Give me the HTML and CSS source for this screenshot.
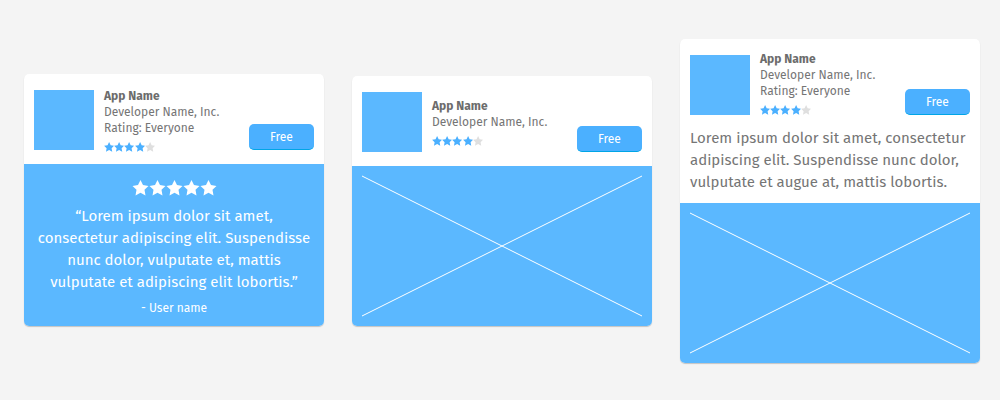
FILE: index.html
```html
<!DOCTYPE html>
<html lang="en">
<head>
<meta charset="utf-8">
<meta name="viewport" content="width=device-width, initial-scale=1">
<title>App cards</title>
<link rel="stylesheet" href="styles.css">
</head>
<body>
<svg class="defs" aria-hidden="true">
  <symbol id="star" viewBox="0 0 16 16"><path d="M8 0l2.500 5.100 5.500.8-4 3.900 1 5.600L8 12.800 3 15.400l1-5.600L0 5.900l5.500-.8z"/></symbol>
</svg>
<main class="cards">
  <article class="card card-review">
    <header class="app">
      <div class="app-icon"></div>
      <div class="app-info">
        <h2 class="app-name">App Name</h2>
        <p class="app-meta">Developer Name, Inc.</p>
        <p class="app-meta">Rating: Everyone</p>
        <div class="stars" role="img" aria-label="4 of 5 stars">
          <svg><use href="#star"/></svg><svg><use href="#star"/></svg><svg><use href="#star"/></svg><svg><use href="#star"/></svg><svg class="off"><use href="#star"/></svg>
        </div>
      </div>
      <button class="get" type="button">Free</button>
    </header>
    <section class="review">
      <div class="stars stars-large" role="img" aria-label="5 of 5 stars">
        <svg><use href="#star"/></svg><svg><use href="#star"/></svg><svg><use href="#star"/></svg><svg><use href="#star"/></svg><svg><use href="#star"/></svg>
      </div>
      <blockquote class="quote">“Lorem ipsum dolor sit amet,<br>consectetur adipiscing elit. Suspendisse<br>nunc dolor, vulputate et, mattis<br>vulputate et adipiscing elit lobortis.”</blockquote>
      <p class="author">- User name</p>
    </section>
  </article>

  <article class="card">
    <header class="app">
      <div class="app-icon"></div>
      <div class="app-info">
        <h2 class="app-name">App Name</h2>
        <p class="app-meta">Developer Name, Inc.</p>
        <div class="stars" role="img" aria-label="4 of 5 stars">
          <svg><use href="#star"/></svg><svg><use href="#star"/></svg><svg><use href="#star"/></svg><svg><use href="#star"/></svg><svg class="off"><use href="#star"/></svg>
        </div>
      </div>
      <button class="get" type="button">Free</button>
    </header>
    <div class="media">
      <svg class="cross" viewBox="0 0 280 140" preserveAspectRatio="none"><path d="M0 0L280 140M280 0L0 140"/></svg>
    </div>
  </article>

  <article class="card">
    <header class="app app-compact">
      <div class="app-icon"></div>
      <div class="app-info">
        <h2 class="app-name">App Name</h2>
        <p class="app-meta">Developer Name, Inc.</p>
        <p class="app-meta">Rating: Everyone</p>
        <div class="stars" role="img" aria-label="4 of 5 stars">
          <svg><use href="#star"/></svg><svg><use href="#star"/></svg><svg><use href="#star"/></svg><svg><use href="#star"/></svg><svg class="off"><use href="#star"/></svg>
        </div>
      </div>
      <button class="get" type="button">Free</button>
    </header>
    <p class="description">Lorem ipsum dolor sit amet, consectetur<br>adipiscing elit. Suspendisse nunc dolor,<br>vulputate et augue at, mattis lobortis.</p>
    <div class="media">
      <svg class="cross" viewBox="0 0 280 140" preserveAspectRatio="none"><path d="M0 0L280 140M280 0L0 140"/></svg>
    </div>
  </article>
</main>
</body>
</html>
```
FILE: styles.css
```css
* {
  box-sizing: border-box;
}

body {
  margin: 0;
  background: #f4f4f4;
  color: #757575;
  font: 12px/16px "Fira Sans", "Noto Sans", sans-serif;
}

h2,
p,
blockquote {
  margin: 0;
}

.defs {
  display: none;
}

.cards {
  display: grid;
  grid-template-columns: repeat(auto-fit, minmax(300px, 1fr));
  align-items: center;
  gap: 28px;
  min-height: 100vh;
  padding: 2px 20px 0 24px;
}

.card {
  border-radius: 5px;
  background: #fff;
  box-shadow: 0 1px 1px rgba(0, 0, 0, 0.2);
  overflow: hidden;
}

.card-review {
  margin-bottom: 2px;
}

.app {
  display: flex;
  align-items: center;
  gap: 10px;
  padding: 16px 10px 14px;
}

.app-compact {
  padding-bottom: 0;
}

.app-icon {
  flex: none;
  width: 60px;
  height: 60px;
  background: #5bb8ff;
}

.app-info {
  flex: 1;
  min-width: 0;
  margin: -3px 0 -2px;
}

.app-compact .app-info {
  align-self: flex-end;
  margin: -4px 0 0;
}

.app-name {
  font-size: 12px;
  line-height: 16px;
  font-weight: 700;
  color: #6c6c6c;
}

.app-meta {
  white-space: nowrap;
}

.stars {
  display: flex;
  width: 51px;
  margin-top: 6px;
}

.stars svg {
  flex: 1;
  min-width: 0;
  height: 10px;
  fill: #4bb0ff;
}

.stars .off {
  fill: #dfdfdf;
}

.get {
  align-self: flex-end;
  width: 65px;
  height: 26px;
  padding: 0;
  border: 0;
  border-bottom: 1px solid #00a5e6;
  border-radius: 5px;
  background: #4bb0ff;
  color: #fff;
  font: inherit;
}

.review {
  padding: 16px 10px 10px;
  background: #5bb8ff;
  color: #fff;
  text-align: center;
}

.stars-large {
  width: 85px;
  margin: 0 auto 9px;
}

.stars-large svg {
  height: 16px;
  fill: #fff;
}

.quote,
.description {
  font-size: 15px;
  line-height: 22px;
  white-space: nowrap;
}

.author {
  margin-top: 7px;
}

.description {
  padding: 12px 10px 10px;
}

.media {
  padding: 10px;
  background: #5bb8ff;
}

.cross {
  display: block;
  width: 100%;
  height: 140px;
  fill: none;
  stroke: #fff;
  stroke-width: 1;
  overflow: visible;
}
```
